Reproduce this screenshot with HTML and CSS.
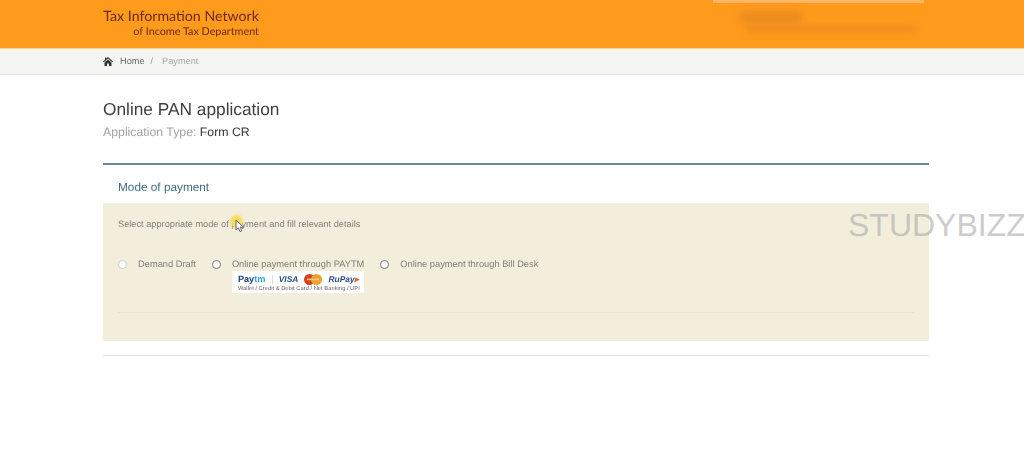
FILE: index.html
```html
<!DOCTYPE html>
<html lang="en">
<head>
    <meta charset="UTF-8">
    <meta name="viewport" content="width=device-width, initial-scale=1.0">
    <title>Online PAN application</title>
    <link rel="stylesheet" href="styles.css">
</head>
<body>
    <header class="topbar">
        <div class="wrap topbar-inner">
            <div class="logo">
                <div class="logo-main">Tax Information Network</div>
                <div class="logo-sub">of Income Tax Department</div>
            </div>
            <div class="blurred">
                <div class="blur-strip"></div>
                <div class="blur-a"></div>
                <div class="blur-b"></div>
            </div>
        </div>
    </header>

    <nav class="crumbs">
        <div class="wrap crumbs-inner">
            <svg class="home-icon" width="10" height="9" viewBox="0 0 20 18">
                <path d="M10 0 L20 9 L18.4 10.6 L10 3.2 L1.6 10.6 L0 9 L4 5.4 V1 H6.5 V3.2 Z"/>
                <path d="M10 5 L17 11 V18 H12 V13 H8 V18 H3 V11 Z"/>
            </svg>
            <a class="crumb-link">Home</a>
            <span class="crumb-sep">/</span>
            <span class="crumb-current">Payment</span>
        </div>
    </nav>

    <main class="wrap content">
        <h1 class="page-title">Online PAN application</h1>
        <p class="app-type">Application Type: <span>Form CR</span></p>

        <section class="panel">
            <h2 class="panel-title">Mode of payment</h2>
            <div class="panel-body">
                <p class="hint">Select appropriate mode of payment and fill relevant details</p>
                <div class="options">
                    <label class="option">
                        <span class="radio radio-off"></span>
                        <span>Demand Draft</span>
                    </label>
                    <label class="option">
                        <span class="radio"></span>
                        <span class="option-text">
                            <span>Online payment through PAYTM</span>
                            <span class="pay-badge">
                                <span class="pay-logos">
                                    <span class="l-paytm">Pay<b>tm</b></span>
                                    <span class="l-div"></span>
                                    <span class="l-visa">VISA</span>
                                    <svg width="18" height="11" viewBox="0 0 18 11">
                                        <circle cx="5.5" cy="5.5" r="5.5" fill="#d9401f"/>
                                        <circle cx="12.5" cy="5.5" r="5.5" fill="#f0a02c"/>
                                        <rect x="3" y="4.6" width="12" height="1.6" fill="#f3c98a"/>
                                    </svg>
                                    <span class="l-rupay">RuPay<i>&#9656;</i></span>
                                </span>
                                <span class="pay-note">Wallet / Credit &amp; Debit Card / Net Banking / UPI</span>
                            </span>
                        </span>
                    </label>
                    <label class="option">
                        <span class="radio"></span>
                        <span>Online payment through Bill Desk</span>
                    </label>
                </div>
                <div class="panel-rule"></div>
            </div>
        </section>
        <div class="bottom-rule"></div>
    </main>

    <!-- screen recording overlays -->
    <div class="cursor-dot"></div>
    <svg class="cursor-arrow" width="10" height="14" viewBox="0 0 10 14">
        <path d="M1 1 V11 L3.4 8.9 L5 12.6 L6.8 11.8 L5.2 8.2 H8.4 Z" fill="#fff" stroke="#666" stroke-width="1"/>
    </svg>
    <div class="watermark">STUDYBIZZ</div>
</body>
</html>
```

FILE: styles.css
```css
body {
    margin: 0;
    background: #fff;
    font-family: "Liberation Sans", Arial, sans-serif;
    color: #777;
    height: 451px;
    overflow: hidden;
    text-rendering: geometricPrecision;
}
.wrap {
    width: 826px;
    margin-left: 103px;
}
.content {
    filter: blur(0.3px);
}
.topbar {
    height: 48px;
    background: #fe9a1c;
    border-bottom: 1px solid #fbd48e;
}
.topbar-inner {
    display: flex;
    justify-content: space-between;
    width: 821px;
}
.logo {
    width: 156px;
    padding-top: 9px;
    color: #6b2a12;
    font-family: Lato, "Liberation Sans", sans-serif;
    text-align: right;
    filter: blur(0.3px);
}
.logo-main {
    font-size: 14.2px;
    line-height: 16px;
    white-space: nowrap;
}
.logo-sub {
    font-size: 10.8px;
    line-height: 13px;
    white-space: nowrap;
}
.blurred {
    width: 211px;
}
.blur-strip {
    height: 3px;
    background: #ffb565;
    filter: blur(0.5px);
}
.blur-a {
    width: 62px;
    height: 12px;
    margin: 8px 0 0 27px;
    background: #ec8c20;
    filter: blur(3px);
}
.blur-b {
    width: 170px;
    height: 6px;
    margin: 3px 0 0 33px;
    background: #ec8c20;
    filter: blur(3px);
}
.crumbs {
    height: 25px;
    background: #f5f5f1;
    border-bottom: 1px solid #e2e2e0;
    font-size: 9.2px;
}
.crumbs-inner {
    display: flex;
    align-items: center;
    height: 24px;
    filter: blur(0.3px);
}
.home-icon {
    fill: #333;
    margin-right: 7px;
}
.crumb-link {
    color: #666;
}
.crumb-sep {
    color: #999;
    margin: 0 9px 0 6px;
}
.crumb-current {
    color: #a5a5a5;
}
.page-title {
    margin: 24px 0 0;
    font-size: 17.3px;
    line-height: 20px;
    font-weight: normal;
    color: #3f3f3f;
}
.app-type {
    margin: 4px 0 0;
    font-size: 12.3px;
    line-height: 18px;
    color: #a3a3a3;
}
.app-type span {
    color: #333;
}
.panel {
    margin-top: 22px;
    border-top: 2px solid #6b8a96;
}
.panel-title {
    margin: 0;
    padding: 16px 15px 9px;
    font-size: 11.8px;
    line-height: 13px;
    font-weight: normal;
    color: #3e6b82;
    border-bottom: 1px solid #f2f0e6;
}
.panel-body {
    background: #f3eddb;
    height: 137px;
    padding: 0 15px;
    box-sizing: border-box;
    overflow: hidden;
}
.hint {
    margin: 14px 0 0;
    font-size: 9.22px;
    line-height: 12px;
    color: #7f7f7c;
}
.options {
    display: flex;
    margin-top: 28px;
    font-size: 9.3px;
    line-height: 12px;
    color: #7f7f7c;
}
.option {
    display: flex;
    align-items: flex-start;
    margin-right: 16px;
}
.radio {
    width: 7px;
    height: 7px;
    border: 1px solid #777;
    border-radius: 50%;
    background: #fff;
    margin: 2px 11px 0 0;
}
.radio-off {
    border-color: #cfcfcb;
}
.option-text {
    display: flex;
    flex-direction: column;
}
.pay-badge {
    display: block;
    width: 132px;
    height: 22px;
    margin-top: 1px;
    background: #fff;
}
.pay-logos {
    display: flex;
    align-items: center;
    justify-content: space-between;
    height: 13px;
    padding: 2px 5px 0 6px;
    font-size: 8.4px;
    font-weight: bold;
    line-height: 11px;
}
.l-paytm {
    font-size: 9.2px;
    color: #1d3f7c;
}
.l-paytm b {
    color: #2aa5dc;
}
.l-div {
    width: 1px;
    height: 9px;
    background: #ddd;
}
.l-visa {
    color: #24508c;
    font-style: italic;
}
.l-rupay {
    color: #2b4a86;
    font-style: italic;
}
.l-rupay i {
    color: #d9641f;
}
.pay-note {
    display: block;
    padding-left: 6px;
    font-size: 5.8px;
    line-height: 7px;
    color: #666;
    white-space: nowrap;
}
.panel-rule {
    margin-top: 19px;
    border-top: 1px solid #e8e2cf;
}
.bottom-rule {
    margin-top: 14px;
    border-top: 1px solid #e4e4e4;
}
.cursor-dot {
    position: absolute;
    left: 230px;
    top: 215px;
    width: 13px;
    height: 13px;
    border-radius: 50%;
    background: #f7dc5c;
    filter: blur(1px);
}
.cursor-arrow {
    position: absolute;
    left: 235px;
    top: 219px;
}
.watermark {
    position: absolute;
    left: 848px;
    top: 207px;
    font-size: 32px;
    line-height: 37px;
    white-space: nowrap;
    color: rgba(170, 170, 170, 0.6);
}
```
